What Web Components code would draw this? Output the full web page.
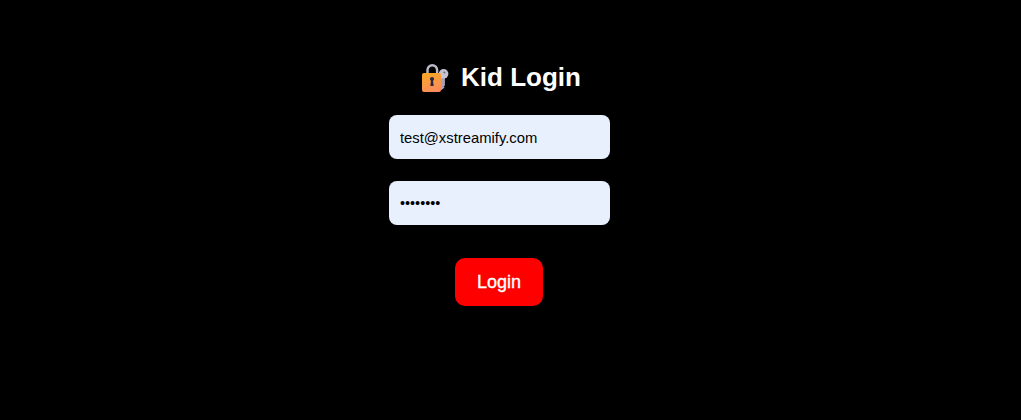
<!DOCTYPE html>
<html lang="en">
<head>
<meta charset="utf-8">
<title>Kid Login</title>
<style>
  html, body { margin: 0; height: 100%; background: #000; }
  body { font-family: "Liberation Sans", Arial, sans-serif; }
</style>
</head>
<body>
<login-page>
  <login-title>Kid Login</login-title>
  <login-field type="email" value="test@xstreamify.com"></login-field>
  <login-field type="password" value="password"></login-field>
  <login-button>Login</login-button>
</login-page>

<script>
class LoginPage extends HTMLElement {
  constructor() {
    super();
    this.attachShadow({ mode: "open" });
    this.shadowRoot.innerHTML = `
      <style>
        :host {
          display: flex;
          flex-direction: column;
          align-items: center;
          width: 999px;
          padding-top: 60px;
          color: #fff;
        }
      </style>
      <slot></slot>
    `;
  }
}

class LoginTitle extends HTMLElement {
  constructor() {
    super();
    this.attachShadow({ mode: "open" });
    this.shadowRoot.innerHTML = `
      <style>
        :host {
          display: flex;
          align-items: center;
          gap: 12px;
          height: 35px;
          margin: 0 0 20px 3px;
          font-size: 26px;
          font-weight: bold;
          color: #fff;
        }
        svg { width: 28px; height: 30px; display: block; }
      </style>
      <svg viewBox="0 0 28 30" aria-hidden="true">
        <defs>
          <linearGradient id="lock" x1="0.3" y1="0" x2="0.6" y2="1">
            <stop offset="0" stop-color="#f9a825"/>
            <stop offset="1" stop-color="#fc8a5e"/>
          </linearGradient>
        </defs>
        <path d="M6.5 12V7a4.8 4.8 0 0 1 9.6 0V12" fill="none" stroke="#bdb8c8" stroke-width="2.4"/>
        <path d="M19.5 13h4.4v9.5l-1.2 1 .9 1-3 2.5h-1.1z" fill="#a7a1b7"/>
        <circle cx="22.6" cy="10.8" r="4.8" fill="#c6c2d1"/>
        <circle cx="23.4" cy="9.4" r="1" fill="#6f6a80"/>
        <rect x="1" y="10" width="19" height="19" rx="2" fill="url(#lock)"/>
        <circle cx="11" cy="16" r="2.1" fill="#2e2547"/>
        <path d="M10.1 17h1.8l.8 6H9.3z" fill="#2e2547"/>
      </svg>
      <span><slot></slot></span>
    `;
  }
}

class LoginField extends HTMLElement {
  constructor() {
    super();
    this.attachShadow({ mode: "open" });
  }

  connectedCallback() {
    this.shadowRoot.innerHTML = `
      <style>
        :host { display: block; width: 221px; margin-bottom: 22px; }
        input {
          display: block;
          box-sizing: border-box;
          width: 100%;
          height: 44px;
          padding: 1px 11px 0;
          border: 0;
          border-radius: 8px;
          outline: 0;
          background: #e8f0fe;
          color: #000;
          font: 14.8px "Liberation Sans", Arial, sans-serif;
        }
        :host([type="password"]) input { padding-top: 0; font-size: 14.4px; }
      </style>
      <input type="${this.getAttribute("type")}" value="${this.getAttribute("value")}">
    `;
  }
}

class LoginButton extends HTMLElement {
  constructor() {
    super();
    this.attachShadow({ mode: "open" });
    this.shadowRoot.innerHTML = `
      <style>
        :host { display: block; margin: 11px 1px 0 0; }
        button {
          display: block;
          width: 88px;
          height: 48px;
          padding: 0;
          border: 0;
          border-radius: 10px;
          background: #f00;
          color: #fff;
          font: 18px "Liberation Sans", Arial, sans-serif;
          -webkit-text-stroke: 0.35px #fff;
          cursor: pointer;
        }
      </style>
      <button type="button"><slot></slot></button>
    `;
  }
}

customElements.define("login-page", LoginPage);
customElements.define("login-title", LoginTitle);
customElements.define("login-field", LoginField);
customElements.define("login-button", LoginButton);
</script>
</body>
</html>
